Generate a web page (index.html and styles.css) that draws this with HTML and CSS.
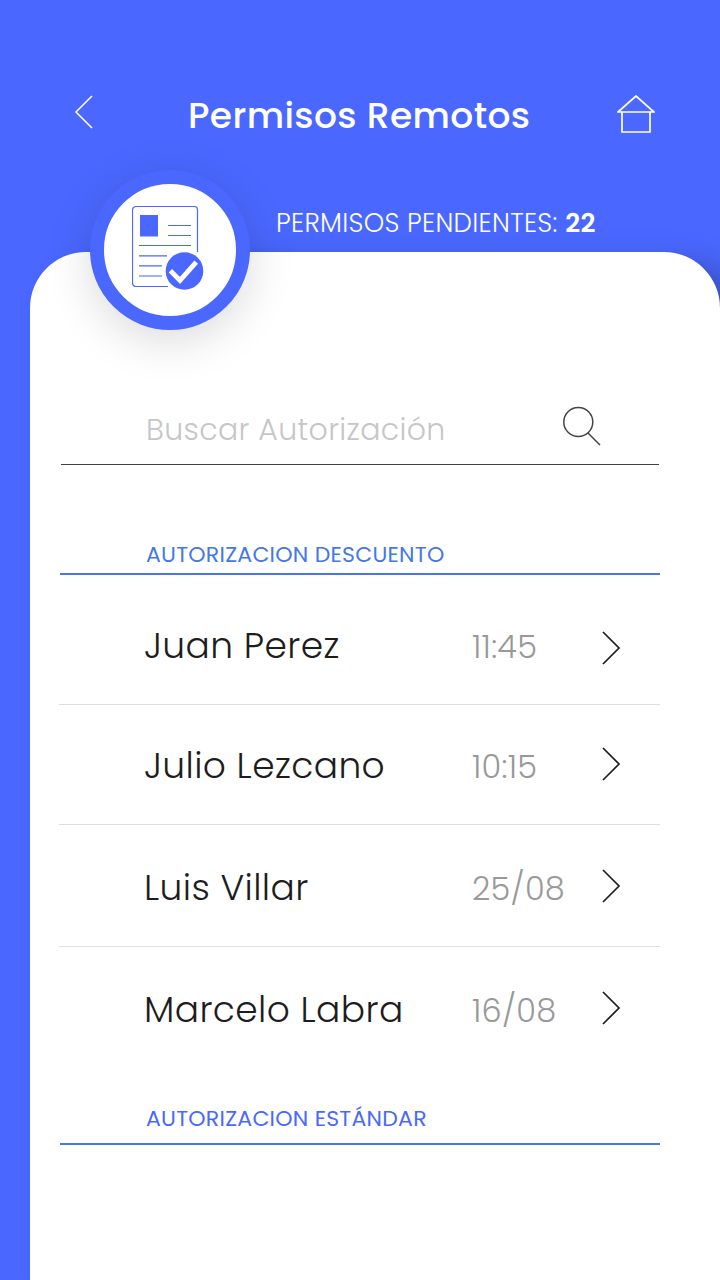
FILE: index.html
```html
<!DOCTYPE html>
<html lang="es">
<head>
<meta charset="utf-8">
<title>Permisos Remotos</title>
<link rel="stylesheet" href="styles.css">
</head>
<body>
<div class="screen">
  <header class="header">
    <div class="topbar">
      <svg class="back" width="20" height="34" viewBox="0 0 20 34"><path d="M18 1 2 17l16 16"/></svg>
      <h1 class="title">Permisos Remotos</h1>
      <svg class="home" width="38" height="39" viewBox="0 0 38 39"><path d="M1 17 19 1l18 16zM5 17v20h28V17"/></svg>
    </div>
    <p class="pending">PERMISOS PENDIENTES: <strong>22</strong></p>
  </header>
  <div class="badge">
    <svg width="74" height="86" viewBox="0 0 74 86">
      <path class="line" d="M65.500 46V4a3.500 3.500 0 0 0-3.500-3.500H4A3.500 3.500 0 0 0 .5 4v73A3.500 3.500 0 0 0 4 80.500h32M36 19.500h23M36 29.500h23M7 39.500h52M7 49.800h28M7 59.800h23M7 70h23"/>
      <path class="solid" d="M8 9h18v21.500H8z"/>
      <circle class="solid" cx="52.500" cy="65" r="18.800"/>
      <path class="check" d="m38.400 64.800 9.600 9.600 16.200-18.200"/>
    </svg>
  </div>
  <main class="card">
    <div class="search">
      <span class="placeholder">Buscar Autorización</span>
      <svg class="glass" width="40" height="40" viewBox="0 0 40 40"><circle cx="16.300" cy="16" r="14.500"/><path d="m26 27 12 12"/></svg>
    </div>
    <h2 class="section discount">AUTORIZACION DESCUENTO</h2>
    <ul class="list">
      <li class="row first"><span class="name">Juan Perez</span><span class="time">11:45</span><svg class="chev" width="20" height="34" viewBox="0 0 20 34"><path d="m2 1 16 16L2 33"/></svg></li>
      <li class="row second"><span class="name">Julio Lezcano</span><span class="time">10:15</span><svg class="chev" width="20" height="34" viewBox="0 0 20 34"><path d="m2 1 16 16L2 33"/></svg></li>
      <li class="row third"><span class="name">Luis Villar</span><span class="time">25/08</span><svg class="chev" width="20" height="34" viewBox="0 0 20 34"><path d="m2 1 16 16L2 33"/></svg></li>
      <li class="row last"><span class="name">Marcelo Labra</span><span class="time">16/08</span><svg class="chev" width="20" height="34" viewBox="0 0 20 34"><path d="m2 1 16 16L2 33"/></svg></li>
    </ul>
    <h2 class="section standard">AUTORIZACION ESTÁNDAR</h2>
  </main>
</div>
</body>
</html>
```
FILE: styles.css
```css
* { box-sizing: border-box; margin: 0; padding: 0; }
body { background: #4a68ff; font-family: Poppins, Inter, sans-serif; font-weight: 300; white-space: nowrap; }
svg { display: block; flex: none; fill: none; }
.screen { position: relative; width: 720px; height: 1280px; overflow: hidden; display: flex; flex-direction: column; }
.header { flex: none; height: 252px; color: #fff; }
.topbar { display: flex; align-items: flex-start; padding: 95px 65px 0 74px; }
.back { stroke: #fff; stroke-width: 1.600; }
.title { flex: 1; padding-left: 94px; font-size: 36px; font-weight: 500; line-height: 41px; letter-spacing: .4px; }
.home { stroke: #fff; stroke-width: 1.700; }
.pending { padding: 70px 0 0 276px; font-size: 26px; line-height: 35px; letter-spacing: .32px; }
.pending strong { font-weight: 600; }
.badge { position: absolute; left: 90px; top: 170px; width: 160px; height: 160px; padding: 22px 0 0 28px; border: 14px solid #4a68ff; border-radius: 50%; background: #fff; box-shadow: 0 10px 46px rgba(0, 0, 0, .15); }
.line { stroke: #4a68ff; stroke-width: 1.200; }
.solid { fill: #4a68ff; }
.check { stroke: #fff; stroke-width: 4.800; }
.card { flex: 1; margin-left: 30px; border-radius: 56px 56px 0 0; background: #fff; box-shadow: 26px 12px 32px rgba(0, 0, 0, .25); }
.search { display: flex; align-items: flex-start; width: 598px; height: 213px; margin-left: 31px; padding-top: 154px; border-bottom: 1px solid #444; }
.placeholder { width: 416px; margin: 4px 0 0 85px; color: #c6c6c6; font-size: 30px; line-height: 40px; letter-spacing: .34px; }
.glass { stroke: #444; stroke-width: 1.500; }
.section { width: 600px; margin-left: 30px; padding-left: 86px; border-bottom: 2px solid #4478e8; color: #4478e8; font-size: 22px; font-weight: 400; line-height: 30px; letter-spacing: .25px; }
.discount { height: 110px; padding-top: 75px; }
.standard { height: 76px; padding-top: 35px; color: #4a68ff; }
.list { width: 601px; margin-left: 29px; list-style: none; }
.row { display: grid; grid-template-columns: 328px 129px 20px; align-items: start; padding-left: 85px; border-bottom: 1px solid #ddd; line-height: 41px; }
.name { color: #1d1d1d; font-size: 36px; letter-spacing: .4px; }
.time { color: #999; font-size: 32px; padding-top: 1px; letter-spacing: .25px; }
.chev { stroke: #1d1d1d; stroke-width: 1.700; margin-top: 2px; }
.first { height: 130px; padding-top: 50px; }
.first .chev { margin-top: 6px; }
.second { height: 120px; padding-top: 40px; }
.third { height: 122px; padding-top: 42px; }
.last { height: 122px; padding-top: 42px; border: 0; }
```
